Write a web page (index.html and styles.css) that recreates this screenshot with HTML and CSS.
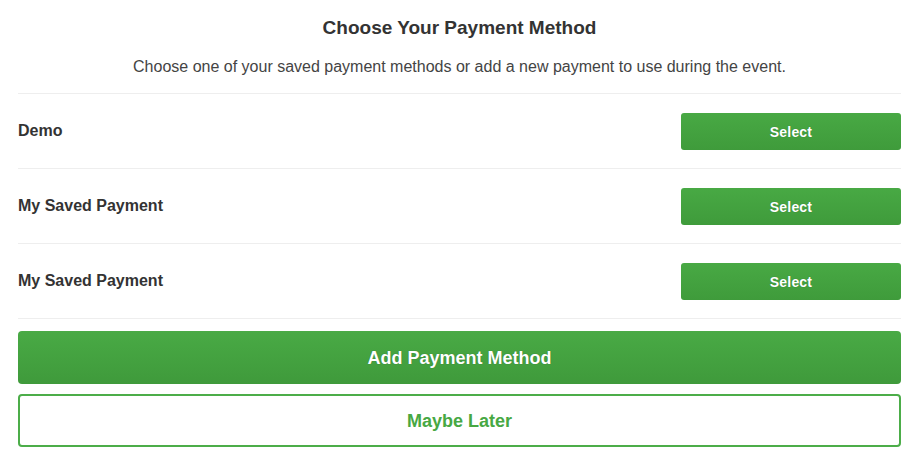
FILE: index.html
```html
<!DOCTYPE html>
<html>
<head>
<meta charset="utf-8">
<link rel="stylesheet" href="styles.css">
</head>
<body>
<div class="modal">
  <h2 class="title">Choose Your Payment Method</h2>
  <p class="subtitle">Choose one of your saved payment methods or add a new payment to use during the event.</p>
  <ul class="methods">
    <li class="method"><span class="name">Demo</span><button class="select">Select</button></li>
    <li class="method"><span class="name">My Saved Payment</span><button class="select">Select</button></li>
    <li class="method"><span class="name">My Saved Payment</span><button class="select">Select</button></li>
  </ul>
  <div class="actions">
    <button class="btn-primary">Add Payment Method</button>
    <button class="btn-outline">Maybe Later</button>
  </div>
</div>
</body>
</html>
```
FILE: styles.css
```css
html, body {
  margin: 0;
  padding: 0;
  background: #fff;
}
body {
  font-family: "Liberation Sans", Arial, sans-serif;
  color: #333;
}
.modal {
  padding: 0 14px 0 18px;
}
.title {
  margin: 0;
  padding-top: 16px;
  font-size: 19px;
  line-height: 23px;
  font-weight: bold;
  text-align: center;
  color: #333;
}
.subtitle {
  margin: 0;
  padding-top: 19px;
  padding-bottom: 17px;
  font-size: 16px;
  line-height: 18px;
  text-align: center;
  color: #444;
  border-bottom: 1px solid #eee;
}
.methods {
  list-style: none;
  margin: 0;
  padding: 0;
}
.method {
  display: flex;
  align-items: center;
  justify-content: space-between;
  padding: 19px 0;
  height: 36px;
  border-bottom: 1px solid #eee;
}
.name {
  font-size: 16px;
  font-weight: bold;
  color: #333;
}
.select {
  width: 220px;
  height: 37px;
  margin-top: 1px;
  border: none;
  border-radius: 3px;
  background: linear-gradient(#48a944, #3f9b3b);
  color: #fff;
  font-family: inherit;
  font-size: 14px;
  font-weight: bold;
  letter-spacing: 0.2px;
  text-shadow: 0 0 1px rgba(0,0,0,0.25);
}
.actions {
  display: flex;
  flex-direction: column;
  gap: 10px;
  padding-top: 12px;
}
.btn-primary {
  height: 53px;
  padding-top: 2px;
  border: none;
  border-radius: 4px;
  background: linear-gradient(#49aa45, #3f9a3b);
  color: #fff;
  font-family: inherit;
  font-size: 18px;
  font-weight: bold;
  text-shadow: 0 0 1px rgba(0,0,0,0.3);
}
.btn-outline {
  height: 53px;
  padding-top: 2px;
  border: 2px solid #4cad49;
  border-radius: 4px;
  background: #fff;
  color: #47a843;
  font-family: inherit;
  font-size: 18px;
  font-weight: bold;
}
```
